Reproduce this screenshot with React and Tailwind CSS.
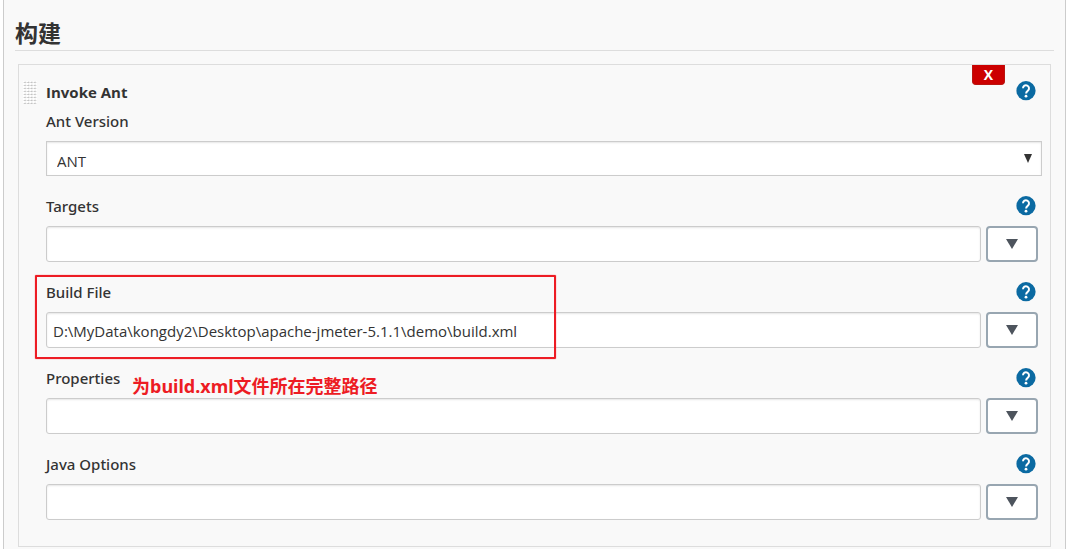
function HelpButton({ topic }) {
  return (
    <button type="button" aria-label={`Help for feature: ${topic}`} className="size-5 shrink-0">
      <svg viewBox="0 0 20 20" className="size-5">
        <circle cx="10" cy="9.7" r="9.6" fill="#0b6aa2" />
        <path
          d="M7 7.2a3 3 0 1 1 5 2.3c-1.1 1-1.9 1.4-1.9 3"
          fill="none"
          stroke="#fff"
          strokeWidth="2"
        />
        <circle cx="10" cy="15.2" r="1.4" fill="#fff" />
      </svg>
    </button>
  );
}

function DragHandle() {
  return (
    <svg viewBox="0 0 14 23" className="h-[23px] w-[14px] shrink-0" aria-hidden="true">
      <defs>
        <pattern id="grip" width="3.3" height="3" patternUnits="userSpaceOnUse">
          <rect width="3.3" height="3" fill="#fff" />
          <rect x="0.6" y="1" width="2.2" height="1" fill="#cfcfcf" />
          <rect x="1.8" y="0.6" width="1" height="1.6" fill="#bdbdbd" />
        </pattern>
      </defs>
      <rect width="14" height="23" fill="url(#grip)" />
    </svg>
  );
}

function Triangle({ className }) {
  return (
    <svg viewBox="0 0 12 10" preserveAspectRatio="none" className={className} aria-hidden="true">
      <path d="M0 0H12L6 10Z" fill="currentColor" />
    </svg>
  );
}

function Field({ id, label, value = "", children }) {
  return (
    <div className="relative mt-[18px]">
      <div className="mb-2 flex h-6 items-center justify-between pr-[6px]">
        <label htmlFor={id} className="font-['Noto_Sans',sans-serif] font-medium">
          {label}
        </label>
        <HelpButton topic={label} />
      </div>
      <div className="flex gap-[5px] pr-1">
        <input
          id={id}
          type="text"
          defaultValue={value}
          className="h-9 min-w-0 flex-1 rounded-[3px] border border-[#ccc] bg-white px-1.5 pt-0.5 shadow-[inset_0_1px_2px_rgba(0,0,0,0.1)]"
        />
        <button
          type="button"
          aria-label={`Expand ${label}`}
          className="flex h-9 w-[52px] items-center justify-center rounded-[4px] border-2 border-[#98a6b1] bg-white text-[#4d545d]"
        >
          <Triangle className="h-[10px] w-3" />
        </button>
      </div>
      {children}
    </div>
  );
}

export default function App() {
  return (
    <div className="bg-white pr-[18px] pl-[3px] font-['Open_Sans','Noto_Sans_CJK_SC',sans-serif] text-[15px] text-[#333]">
      <main className="min-h-screen border-x border-[#ccc] bg-[#f9f9f9] px-[11px] pt-4">
        <h2 className="flex h-[35px] items-center border-b border-[#ddd] text-[23px] font-bold">构建</h2>
        <section className="mx-[3px] mt-[13px] border border-[#ddd] pr-2 pb-[26px] pl-1">
          <div className="flex items-start">
            <div className="mr-[9px] pt-4">
              <DragHandle />
            </div>
            <div className="min-w-0 flex-1">
              <div className="mb-1 flex h-10 items-start pr-[6px]">
                <h3 className="mr-auto pt-[14px] leading-[26px] font-bold">Invoke Ant</h3>
                <button
                  type="button"
                  className="mr-[11px] flex h-5 w-[33px] items-center justify-center rounded-b-[4px] border border-t-0 border-[#b91510] bg-[#c00] text-[14px] font-bold text-white"
                >
                  X
                </button>
                <div className="flex pt-4">
                  <HelpButton topic="Invoke Ant" />
                </div>
              </div>
              <label
                htmlFor="ant-version"
                className="mb-2 flex h-6 items-center font-['Noto_Sans',sans-serif] font-medium"
              >
                Ant Version
              </label>
              <div className="grid items-center">
                <select
                  id="ant-version"
                  className="col-start-1 row-start-1 h-[35px] w-full appearance-none border border-[#ccc] bg-white px-[10px] pt-1.5 shadow-[inset_0_1px_2px_rgba(0,0,0,0.1)]"
                >
                  <option>ANT</option>
                </select>
                <Triangle className="pointer-events-none col-start-1 row-start-1 mr-[10px] h-[9px] w-2 justify-self-end" />
              </div>
              <Field id="targets" label="Targets" />
              <Field
                id="build-file"
                label="Build File"
                value="D:\MyData\kongdy2\Desktop\apache-jmeter-5.1.1\demo\build.xml"
              >
                <div className="pointer-events-none absolute -top-[5px] -left-[11px] h-[84px] w-[521px] rounded-[1px] border-2 border-[#ed1c24] shadow-[0_0_1px_#ed1c24]" />
              </Field>
              <Field id="properties" label="Properties">
                <p className="pointer-events-none absolute top-2 left-[86px] font-['Noto_Sans','Noto_Sans_CJK_SC',sans-serif] text-[18px] leading-6 font-bold whitespace-nowrap text-[#ed1c24]">
                  为build.xml文件所在完整路径
                </p>
              </Field>
              <Field id="java-options" label="Java Options" />
            </div>
          </div>
        </section>
      </main>
    </div>
  );
}
